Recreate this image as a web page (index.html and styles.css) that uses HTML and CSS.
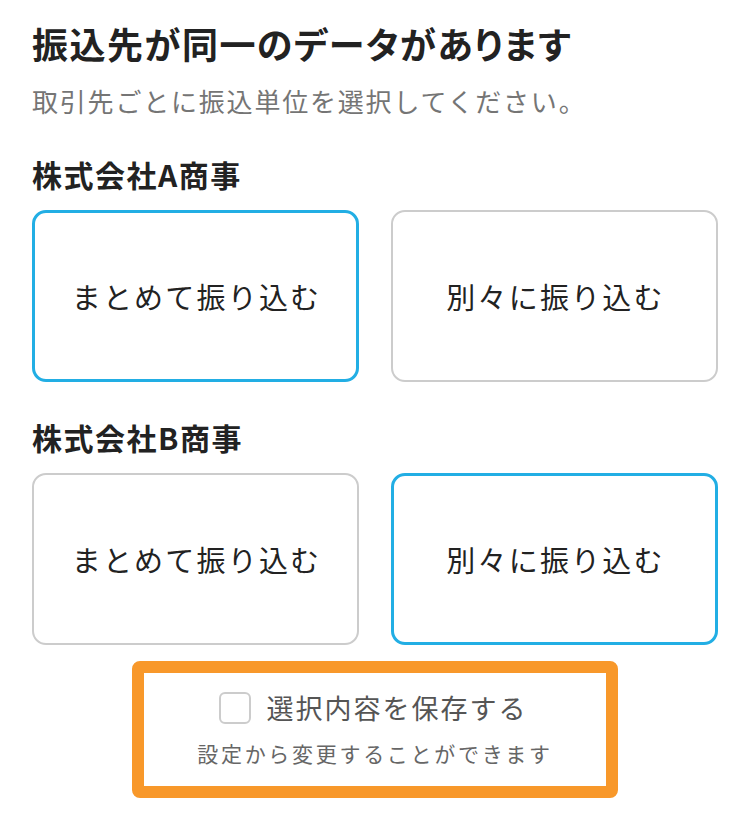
FILE: index.html
```html
<!DOCTYPE html>
<html lang="ja">
<head>
<meta charset="utf-8">
<title>振込先が同一のデータがあります</title>
<link rel="stylesheet" href="styles.css">
</head>
<body>
<main class="page">
  <h1 class="title">振込先が同一のデータがあります</h1>
  <p class="lead">取引先ごとに振込単位を選択してください。</p>

  <section class="group">
    <h2 class="company">株式会社A商事</h2>
    <div class="choices">
      <button class="choice is-selected" type="button">まとめて振り込む</button>
      <button class="choice" type="button">別々に振り込む</button>
    </div>
  </section>

  <section class="group">
    <h2 class="company">株式会社B商事</h2>
    <div class="choices">
      <button class="choice" type="button">まとめて振り込む</button>
      <button class="choice is-selected" type="button">別々に振り込む</button>
    </div>
  </section>

  <div class="save-box">
    <label class="save-row">
      <span class="checkbox"></span>
      <span class="save-label">選択内容を保存する</span>
    </label>
    <p class="save-note">設定から変更することができます</p>
  </div>
</main>
</body>
</html>
```

FILE: styles.css
```css
* {
  box-sizing: border-box;
}

html, body {
  margin: 0;
  padding: 0;
  background: #ffffff;
}

body {
  font-family: "Noto Sans CJK JP", "Noto Sans", sans-serif;
  color: #222222;
}

.page {
  padding: 19px 32px 0;
}

.title {
  margin: 0;
  font-size: 36px;
  line-height: 48px;
  font-weight: 700;
  letter-spacing: 1.5px;
  font-feature-settings: "palt";
  color: #222222;
}

.lead {
  margin: 16px 0 0;
  font-size: 26px;
  line-height: 36px;
  letter-spacing: 1.8px;
  color: #757575;
}

.group {
  margin-top: 35px;
}

.company {
  margin: 0;
  font-size: 30px;
  line-height: 40px;
  font-weight: 700;
  letter-spacing: 1.5px;
  color: #222222;
}

.choices {
  margin-top: 16px;
  display: grid;
  grid-template-columns: 1fr 1fr;
  gap: 32px;
}

.choice {
  height: 172px;
  border: 2px solid #cccccc;
  border-radius: 14px;
  background: #ffffff;
  font-family: inherit;
  font-size: 29px;
  letter-spacing: 2.2px;
  color: #222222;
  padding: 0 0 0 2px;
  cursor: pointer;
}

.choice.is-selected {
  border: 3px solid #22aee4;
}

.save-box {
  width: 486px;
  margin: 16px auto 0;
  border: 12px solid #f8982a;
  border-radius: 8px;
  padding: 17px 0 18px;
  text-align: center;
}

.save-row {
  display: flex;
  align-items: center;
  justify-content: center;
  gap: 16px;
  height: 36px;
  padding-right: 4px;
}

.checkbox {
  width: 32px;
  height: 32px;
  border: 2px solid #cccccc;
  border-radius: 6px;
  background: #ffffff;
}

.save-label {
  font-size: 27px;
  line-height: 36px;
  letter-spacing: 2px;
  color: #555555;
}

.save-note {
  margin: 12px 0 0;
  font-size: 21px;
  line-height: 30px;
  letter-spacing: 2.7px;
  color: #666666;
}
```
